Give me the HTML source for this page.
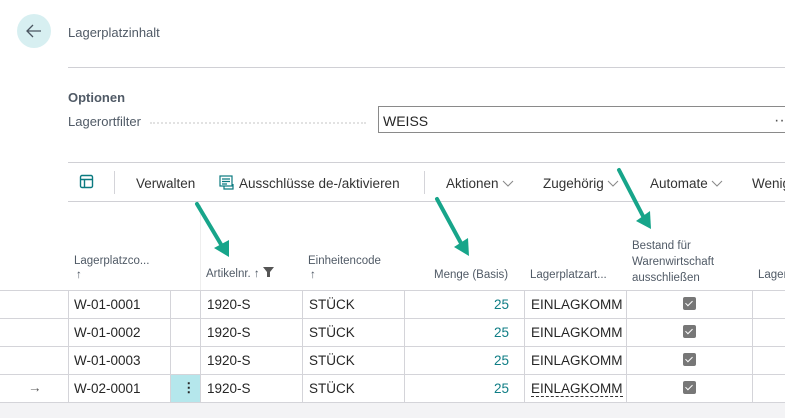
<!DOCTYPE html>
<html><head><meta charset="utf-8"><style>
body{margin:0;width:785px;height:418px;overflow:hidden;background:#fff;font-family:"Liberation Sans",sans-serif;color:#212121;position:relative}
.a{position:absolute;white-space:nowrap}
.h{font-size:11.5px;color:#505a66}
.c{font-size:13.5px;color:#262626}
.vl{position:absolute;width:1px;background:#d4d4d9}
.hl{position:absolute;height:1px;background:#d4d4d9}
.cb{position:absolute;width:13px;height:13px;background:#777;border-radius:2px}
.cb:after{content:"";position:absolute;left:4px;top:1.5px;width:3px;height:6px;border:solid #fff;border-width:0 1.6px 1.6px 0;transform:rotate(45deg)}
.ch{display:inline-block;vertical-align:middle;margin-left:3px}
</style></head><body>
<div class="a" style="left:17px;top:14px;width:34px;height:34px;border-radius:50%;background:#d7eff1"></div>
<svg class="a" style="left:24px;top:21px" width="20" height="20"><path d="M17 10H3M9 4L3 10L9 16" fill="none" stroke="#4a5560" stroke-width="1.3"/></svg>
<div class="a" style="left:68px;top:25px;font-size:13px;color:#505a66">Lagerplatzinhalt</div>
<div class="hl" style="left:68px;top:67px;width:717px;background:#d0d0d5"></div>
<div class="a" style="left:68px;top:90px;font-size:13px;font-weight:bold;color:#505a66">Optionen</div>
<div class="a" style="left:68px;top:114px;font-size:13px;color:#505a66">Lagerortfilter</div>
<div class="a" style="left:150px;top:122px;width:216px;border-top:2px dotted #e2e2e2"></div>
<div class="a" style="left:378px;top:106px;width:420px;height:27px;border:1px solid #8a8a8a;box-sizing:border-box"></div>
<div class="a c" style="left:383px;top:113px;font-size:14px">WEISS</div>
<div class="a" style="left:774px;top:112px;color:#555">··</div>
<div class="hl" style="left:68px;top:162px;width:717px;background:#d0d0d5"></div>
<div class="hl" style="left:68px;top:201px;width:717px;background:#d0d0d5"></div>
<svg class="a" style="left:79px;top:174px" width="16" height="16"><rect x="1.5" y="1.5" width="12" height="12" rx="1.5" fill="none" stroke="#0b7a80" stroke-width="1.4"/><path d="M1.5 5.5h12M5.5 5.5v8" stroke="#0b7a80" stroke-width="1.4"/></svg>
<div class="vl" style="left:114px;top:171px;height:23px"></div>
<div class="a" style="left:136px;top:176px;font-size:13.5px;color:#333">Verwalten</div>
<svg class="a" style="left:219px;top:175px" width="16" height="16"><rect x="1" y="1" width="12" height="10" fill="none" stroke="#0b7a80" stroke-width="1.2"/><path d="M3 4h8M3 6.5h8M3 9h5M5 11v3h9v-5" fill="none" stroke="#0b7a80" stroke-width="1.2"/></svg>
<div class="a" style="left:239px;top:176px;font-size:13.5px;color:#333">Ausschlüsse de-/aktivieren</div>
<div class="vl" style="left:424px;top:171px;height:23px"></div>
<div class="a" style="left:446px;top:176px;font-size:13.5px;color:#333">Aktionen<svg class="ch" width="12" height="8"><path d="M1 1l5 5 5-5" fill="none" stroke="#888" stroke-width="1"/></svg></div>
<div class="a" style="left:543px;top:176px;font-size:13.5px;color:#333">Zugehörig<svg class="ch" width="12" height="8"><path d="M1 1l5 5 5-5" fill="none" stroke="#888" stroke-width="1"/></svg></div>
<div class="a" style="left:650px;top:176px;font-size:13.5px;color:#333">Automate<svg class="ch" width="12" height="8"><path d="M1 1l5 5 5-5" fill="none" stroke="#888" stroke-width="1"/></svg></div>
<div class="a" style="left:752px;top:176px;font-size:13.5px;color:#333">Wenig</div>
<!-- headers -->
<div class="a h" style="left:74px;top:255px">Lagerplatzco...</div>
<div class="a h" style="left:76px;top:269px">↑</div>
<div class="a h" style="left:206px;top:267px">Artikelnr. ↑ <svg width="11" height="10"><path d="M0 0h11L7 5v5H4V5z" fill="#555"/></svg></div>
<div class="vl" style="left:200px;top:205px;height:85px;background:#eee"></div>
<div class="a h" style="left:308px;top:255px">Einheitencode</div>
<div class="a h" style="left:310px;top:269px">↑</div>
<div class="a h" style="left:434px;top:269px">Menge (Basis)</div>
<div class="a h" style="left:530px;top:269px">Lagerplatzart...</div>
<div class="a h" style="left:632px;top:238px;line-height:16px">Bestand für<br>Warenwirtschaft<br>ausschließen</div>
<div class="a h" style="left:758px;top:269px">Lager</div>
<!-- grid -->
<div class="hl" style="left:0;top:290px;width:785px"></div>
<div class="hl" style="left:0;top:318px;width:785px"></div>
<div class="hl" style="left:0;top:346px;width:785px"></div>
<div class="hl" style="left:0;top:374px;width:785px"></div>
<div class="hl" style="left:0;top:402px;width:785px"></div>
<div class="a" style="left:0;top:403px;width:785px;height:15px;background:#f3f3f5"></div>
<div class="a" style="left:171px;top:375px;width:29px;height:27px;background:#b5e7ec"></div>
<div class="vl" style="left:68px;top:290px;height:112px"></div>
<div class="vl" style="left:170px;top:290px;height:112px"></div>
<div class="vl" style="left:200px;top:290px;height:112px"></div>
<div class="vl" style="left:302px;top:290px;height:112px"></div>
<div class="vl" style="left:404px;top:290px;height:112px"></div>
<div class="vl" style="left:524px;top:290px;height:112px"></div>
<div class="vl" style="left:626px;top:290px;height:112px"></div>
<div class="vl" style="left:752px;top:290px;height:112px"></div>
<div class="a c" style="left:74px;top:297px">W-01-0001</div>
<div class="a c" style="left:74px;top:325px">W-01-0002</div>
<div class="a c" style="left:74px;top:353px">W-01-0003</div>
<div class="a c" style="left:74px;top:381px">W-02-0001</div>
<div class="a c" style="left:28px;top:380px;color:#555">→</div>
<div class="a c" style="left:182px;top:380px;font-weight:bold">⋮</div>
<div class="a c" style="left:207px;top:297px">1920-S</div>
<div class="a c" style="left:207px;top:325px">1920-S</div>
<div class="a c" style="left:207px;top:353px">1920-S</div>
<div class="a c" style="left:207px;top:381px">1920-S</div>
<div class="a c" style="left:309px;top:297px">STÜCK</div>
<div class="a c" style="left:309px;top:325px">STÜCK</div>
<div class="a c" style="left:309px;top:353px">STÜCK</div>
<div class="a c" style="left:309px;top:381px">STÜCK</div>
<div class="a c" style="left:494px;top:297px;color:#0f7d85">25</div>
<div class="a c" style="left:494px;top:325px;color:#0f7d85">25</div>
<div class="a c" style="left:494px;top:353px;color:#0f7d85">25</div>
<div class="a c" style="left:494px;top:381px;color:#0f7d85">25</div>
<div class="a c" style="left:531px;top:297px">EINLAGKOMM</div>
<div class="a c" style="left:531px;top:325px">EINLAGKOMM</div>
<div class="a c" style="left:531px;top:353px">EINLAGKOMM</div>
<div class="a c" style="left:531px;top:381px;border-bottom:1px dashed #333;line-height:15px">EINLAGKOMM</div>
<div class="cb" style="left:683px;top:297px"></div>
<div class="cb" style="left:683px;top:325px"></div>
<div class="cb" style="left:683px;top:353px"></div>
<div class="cb" style="left:683px;top:381px"></div>
<!-- arrows -->
<svg class="a" style="left:0;top:0" width="785" height="418">
<g stroke="#17a58a" stroke-width="4" stroke-linecap="round" fill="#17a58a">
<line x1="197" y1="204" x2="222" y2="246"/>
<line x1="437" y1="199" x2="462" y2="245"/>
<line x1="619" y1="170" x2="644" y2="218"/>
</g>
<g fill="#17a58a">
<polygon points="214,248 229,257 229,240"/>
<polygon points="454,247 469,256 468,238"/>
<polygon points="636,221 651,229 650,211"/>
</g>
</svg>
</body></html>
